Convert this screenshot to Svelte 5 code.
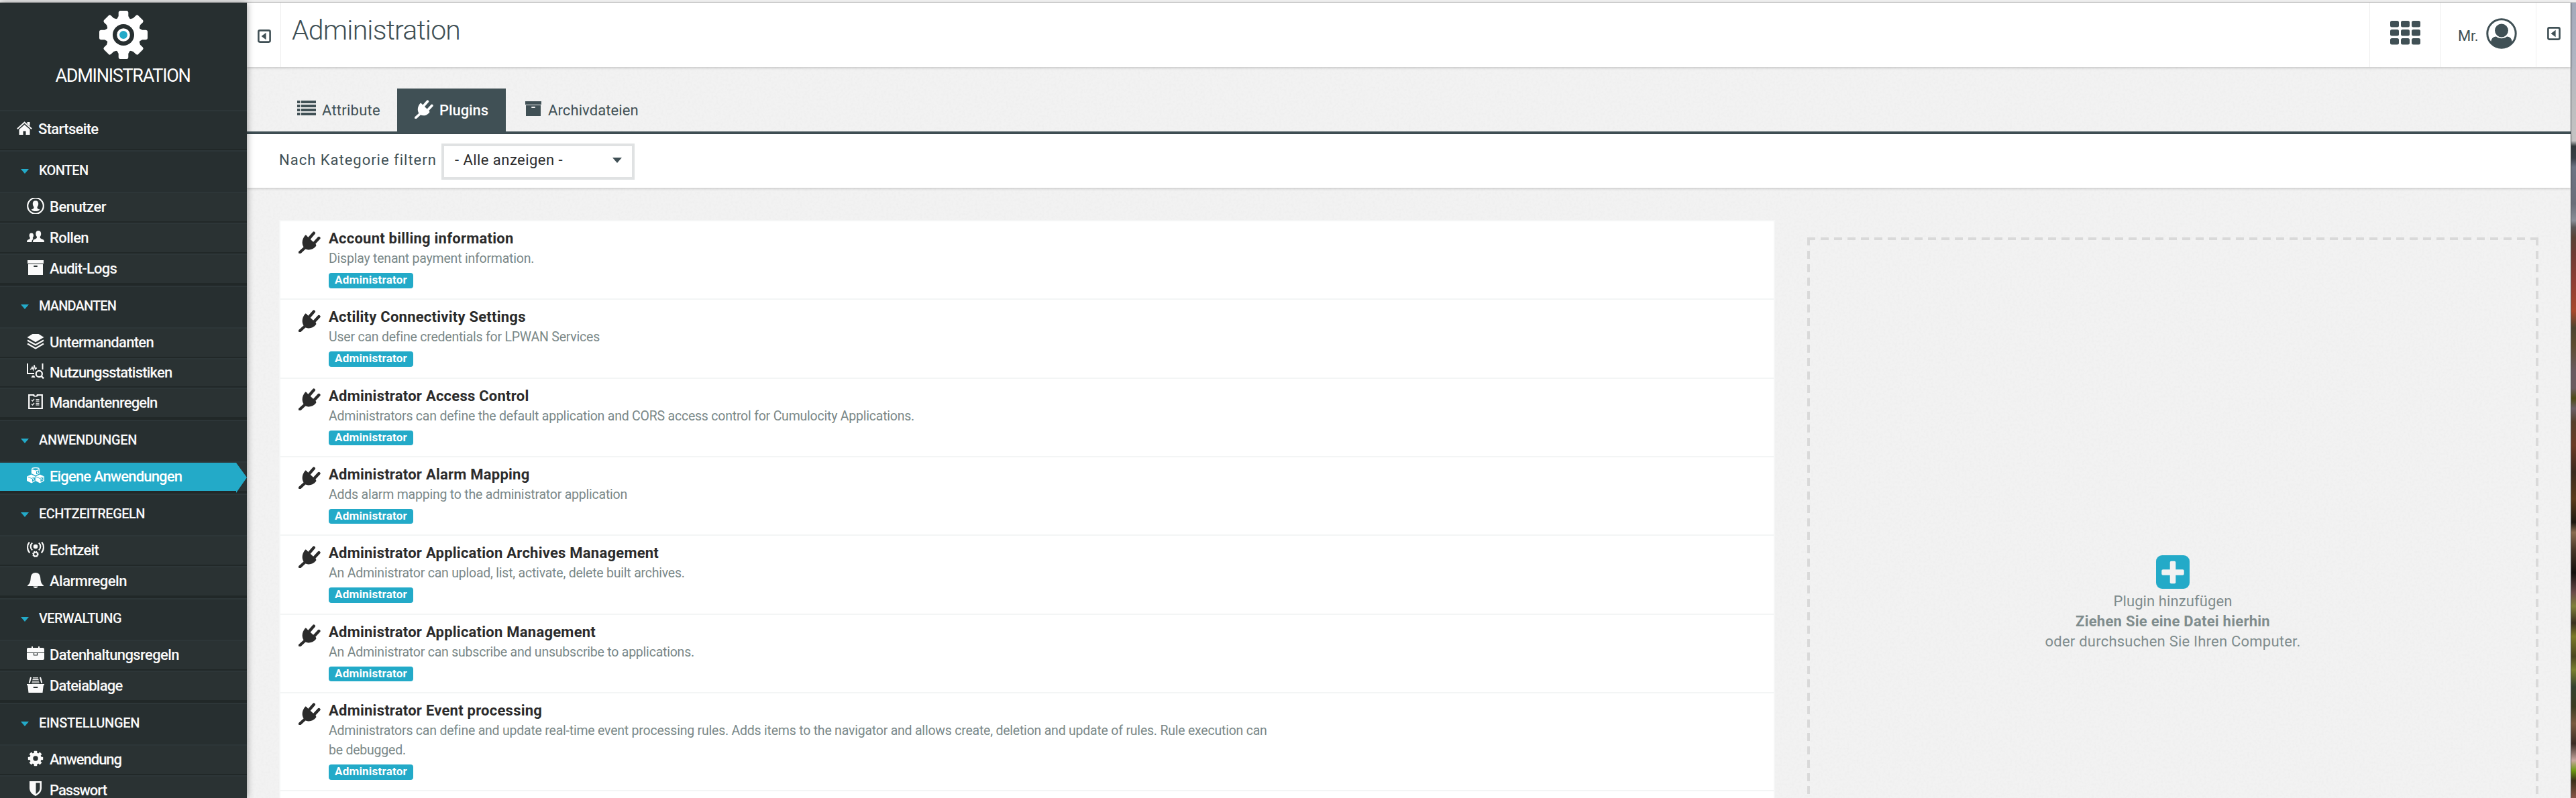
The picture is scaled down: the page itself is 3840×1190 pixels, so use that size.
<script>
  const nav = [
    { title: 'KONTEN', ls: -0.72, items: [
      { icon: 'user', label: 'Benutzer', ls: -0.49 },
      { icon: 'users', label: 'Rollen', ls: -0.6 },
      { icon: 'archive', label: 'Audit-Logs', ls: -0.77 }
    ] },
    { title: 'MANDANTEN', ls: -0.87, items: [
      { icon: 'layers', label: 'Untermandanten', ls: -0.69 },
      { icon: 'stats', label: 'Nutzungsstatistiken', ls: -0.79, tight: true },
      { icon: 'rules', label: 'Mandantenregeln', ls: -0.81 }
    ] },
    { title: 'ANWENDUNGEN', ls: -0.36, items: [
      { icon: 'cubes', label: 'Eigene Anwendungen', ls: -0.84, active: true }
    ] },
    { title: 'ECHTZEITREGELN', ls: -0.51, items: [
      { icon: 'broadcast', label: 'Echtzeit', ls: -0.73 },
      { icon: 'bell', label: 'Alarmregeln', ls: -0.5 }
    ] },
    { title: 'VERWALTUNG', ls: -0.57, items: [
      { icon: 'briefcase', label: 'Datenhaltungsregeln', ls: -0.6 },
      { icon: 'drawer', label: 'Dateiablage', ls: -0.76 }
    ] },
    { title: 'EINSTELLUNGEN', ls: -0.33, items: [
      { icon: 'gear', label: 'Anwendung', ls: -1.04 },
      { icon: 'shield', label: 'Passwort', ls: -0.98 }
    ] }
  ];

  const plugins = [
    ['Account billing information', 'Display tenant payment information.'],
    ['Actility Connectivity Settings', 'User can define credentials for LPWAN Services'],
    ['Administrator Access Control', 'Administrators can define the default application and CORS access control for Cumulocity Applications.'],
    ['Administrator Alarm Mapping', 'Adds alarm mapping to the administrator application'],
    ['Administrator Application Archives Management', 'An Administrator can upload, list, activate, delete built archives.'],
    ['Administrator Application Management', 'An Administrator can subscribe and unsubscribe to applications.'],
    ['Administrator Event processing', 'Administrators can define and update real-time event processing rules. Adds items to the navigator and allows create, deletion and update of rules. Rule execution can be debugged.'],
    ['', '']
  ];

  const teeth = [0, 45, 90, 135, 180, 225, 270, 315];
</script>

{#snippet plug()}
  <svg class="plug" viewBox="0 0 33 33">
    <path d="M10.2 5.6 Q12 5.4 13 7.4 L26 19.6 Q27 21.4 25.6 22.6 C21 28 14.5 28.6 9.8 26 C4.4 21.6 4 12.6 10.2 5.6Z" fill="currentColor" />
    <path d="M15.5 11 L22.8 2.6 M23 18 L30.4 10" stroke="currentColor" stroke-width="4.4" stroke-linecap="round" />
    <path d="M10 24 L2 31.4" stroke="currentColor" stroke-width="4.2" stroke-linecap="round" />
  </svg>
{/snippet}

{#snippet collapse()}
  <svg class="collapse" viewBox="0 0 20 20">
    <rect x="1.4" y="1.4" width="17.2" height="17.2" rx="2" fill="none" stroke="currentColor" stroke-width="2.6" />
    <path d="M5.6 10 L12.6 4.8 V15.2Z" fill="currentColor" />
  </svg>
{/snippet}

{#snippet archive(slot)}
  <path d="M1 1h24v5H1z M2 7h22v16H2z" fill="currentColor" />
  <rect x="10" y="9" width="6" height="2" rx="1" fill={slot} />
{/snippet}

{#snippet navIcon(name)}
  <svg class="ico" viewBox="0 0 26 24">
    {#if name === 'user'}
      <circle cx="13" cy="12" r="11.8" fill="none" stroke="currentColor" stroke-width="2.2" />
      <path d="M13 4.2c3 0 4.2 2 4.2 4.6 0 2-.7 3.8-1.7 4.8 0 2.4.4 3 3.9 3.8-1.6 1.9-3.8 2.5-6.4 2.5s-4.8-.6-6.4-2.5c3.5-.8 3.9-1.4 3.9-3.8-1-1-1.7-2.8-1.7-4.8 0-2.6 1.2-4.6 4.2-4.6z" fill="currentColor" />
    {:else if name === 'users'}
      <path d="M17.2 3c2.7 0 4 1.9 4 4.5 0 2-.7 3.6-1.6 4.5 0 2.2.8 2.9 3.4 3.7 2 .6 3 1.4 3 4.3H9c0-2.9 1-3.7 3-4.3 2.3-.8 3-1.5 3-3.7-1-.9-1.7-2.5-1.7-4.5 0-2.6 1.3-4.5 3.9-4.5z" fill="currentColor" />
      <path d="M6.8 6.5c2.3 0 3.2 1.5 3.2 3.6 0 1.6-.5 2.7-1.2 3.4 0 1 .3 1.6 1 2-1.5.8-2.5 1.8-2.5 4.5H0c0-2.4.8-3.2 2.400-3.7 1.800-.6 2.400-1.200 2.400-2.800-.7-.7-1.200-1.800-1.200-3.400 0-2.100 1-3.600 3.200-3.600z" fill="currentColor" />
    {:else if name === 'archive'}
      {@render archive('#2a3233')}
    {:else if name === 'layers'}
      <path d="M8.5 1h9L25.5 6 13 13.2.5 6z" fill="currentColor" />
      <path d="M1 10.5 13 17.3 25 10.5M1 15.5 13 22.4 25 15.5" fill="none" stroke="currentColor" stroke-width="2.2" />
    {:else if name === 'stats'}
      <path d="M1 0v15h10M23.5 0v9" fill="none" stroke="currentColor" stroke-width="2" />
      <path d="M5 8.500h1.500l1.500-3 1.500 4 1.600-7 1.400 6 1-1.500h1.500" fill="none" stroke="currentColor" stroke-width="1.4" />
      <path d="M6.500 21l1.500-3h3l1.500 3z" fill="currentColor" />
      <circle cx="18.300" cy="15.500" r="4.600" fill="none" stroke="currentColor" stroke-width="2.2" />
      <path d="M21.300 18.500 25 22.300" stroke="currentColor" stroke-width="2.4" />
    {:else if name === 'rules'}
      <path d="M11 2H3.200v20h19.600V2H15" fill="none" stroke="currentColor" stroke-width="2.2" />
      <path d="M9 1h2.200c0 3 3.600 3 3.600 0H17v2.500q-4 2.500-8 0z" fill="currentColor" />
      <path d="M7 9.500l1.500 1.500 2.500-3M7 15.500l1.500 1.500 2.500-3" fill="none" stroke="currentColor" stroke-width="1.3" />
      <path d="M13.500 8.700h5M13.500 11.200h5M13.500 14.300h5M13.500 16.800h5" stroke="currentColor" stroke-width="1.3" />
    {:else if name === 'cubes'}
      <path d="M6.800 2.500 13 4.500 19.200 2.500V9L13 12 6.800 9z" fill="currentColor" />
      <path d="M0 13.500 6.500 10.500 13 13.500V20l-6 3.500L0 20z M13 13.500 19.500 10.500 26 13.500V20l-6.500 3.500L13 20z" fill="currentColor" />
      <path d="M7.500 1.700 Q13 -.5 18.500 1.700" fill="none" stroke="currentColor" stroke-width="1.3" />
      <path d="M1.500 14l5.500 2.500 5.500-2.500M14 14l5.500 2.500 5.500-2.500M13 12v8" fill="none" stroke="#23aac8" stroke-width=".9" />
      <path d="M14.500 6.300l3.200-1.300v3l-3.200 1.500zM8.500 17.800l3-1.500v2.700l-3 1.500zM21 17.800l3-1.500v2.700l-3 1.500z" fill="none" stroke="#23aac8" stroke-width="1.1" />
    {:else if name === 'broadcast'}
      <circle cx="13" cy="8" r="3.300" fill="currentColor" />
      <path d="M8.200 13.500a7.200 7.200 0 0 1 0-11M17.800 13.500a7.200 7.200 0 0 0 0-11M4.300 17.500c-4.200-4.500-4.200-11.500-.5-16M21.700 17.500c4.200-4.500 4.200-11.500.5-16" fill="none" stroke="currentColor" stroke-width="2.1" />
      <circle cx="13" cy="19.500" r="3" fill="none" stroke="currentColor" stroke-width="2" />
      <circle cx="13" cy="19.500" r="4.200" fill="none" stroke="currentColor" stroke-width="1.2" stroke-dasharray="1.650 1.650" />
    {:else if name === 'bell'}
      <path d="M13 1c4.500 0 6.800 3 7.200 7.500.5 6.500 1.400 8.800 4.800 11.500v1H1v-1c3.400-2.700 4.300-5 4.800-11.500C6.200 4 8.500 1 13 1zM9.500 21.500h7c-.5 3.200-6.500 3.200-7 0z" fill="currentColor" />
    {:else if name === 'briefcase'}
      <path d="M2 3h5V1h2v2h8V1h2v2h5q2 0 2 2v5H0V5q0-2 2-2z M0 11h26v8q0 2-2 2H2q-2 0-2-2z" fill="currentColor" />
      <path d="M10.500 11v3h5v-3" fill="none" stroke="#2a3233" stroke-width="1.2" />
    {:else if name === 'drawer'}
      <path d="M0 11h26v2h-1.200L23.500 24h-21L1.200 13H0z" fill="currentColor" />
      <rect x="9.500" y="15" width="7" height="2" rx="1" fill="#2a3233" />
      <path d="M6 1 3.700 9.500M20 1l2.300 8.500" stroke="currentColor" stroke-width="2" />
      <path d="M9 1.800h8M8.500 4.300h9M8 6.800h10M7.500 9.200h11" stroke="currentColor" stroke-width="1.3" />
    {:else if name === 'gear'}
      <circle cx="13" cy="12" r="6.200" fill="none" stroke="currentColor" stroke-width="5" />
      {#each teeth as a}
        <rect x="10.700" y=".8" width="4.600" height="5" rx=".8" fill="currentColor" transform="rotate({a} 13 12)" />
      {/each}
    {:else if name === 'shield'}
      <path d="M4 0h18v10c0 5.500-3.500 9.500-9 12C7.500 19.500 4 15.500 4 10z" fill="currentColor" />
      <path d="M13.500 2.500H19.500V10.500c0 3.500-2.500 6.500-6 8.500z" fill="#2a3233" />
    {/if}
  </svg>
{/snippet}

<div class="page">
  <div class="chrome"></div>
  <div class="frame">
    <nav class="sidebar">
      <div class="brand">
        <svg class="logo" viewBox="-36 -36 72 72">
          {#each teeth as a}
            <path d="M-5 -36H5Q7 -36 7.300 -33.500V-28L10 -23H-10L-7.300 -28V-33.500Q-7 -36 -5 -36Z" fill="#fff" transform="rotate({a})" />
          {/each}
          <circle r="26" fill="#fff" />
          <circle r="16" fill="#272f30" />
          <circle r="9.800" fill="#fff" />
          <circle r="5.900" fill="#23aac8" />
        </svg>
        <span class="brand-name">ADMINISTRATION</span>
      </div>
      <div class="home">
        <svg class="house" viewBox="0 0 23 20">
          <path d="M11.500 5 19.500 12V20H13.500V14.500H9.500V20H3.500V12z M15.500 1h4v6l-4-3.500z" fill="currentColor" />
          <path d="M.8 11.300 11.500 1.600 22.200 11.300" fill="none" stroke="currentColor" stroke-width="1.9" />
        </svg>
        <span>Startseite</span>
      </div>
      {#each nav as group}
        <div class="group">
          <i class="caret"></i><span style:letter-spacing="{group.ls}px">{group.title}</span>
        </div>
        <div class="items">
          {#each group.items as it}
            <div class="item" class:active={it.active} class:tight={it.tight}>
              {@render navIcon(it.icon)}
              <span style:letter-spacing="{it.ls}px">{it.label}</span>
            </div>
          {/each}
        </div>
      {/each}
    </nav>

    <main>
      <svg class="grain" aria-hidden="true">
        <filter id="grain">
          <feTurbulence type="fractalNoise" baseFrequency=".28" numOctaves="2" seed="4" />
          <feColorMatrix values="0 0 0 0 .5  0 0 0 0 .5  0 0 0 0 .5  .14 0 0 0 -.055" />
        </filter>
        <rect width="100%" height="100%" filter="url(#grain)" />
      </svg>

      <header>
        <div class="toggle">{@render collapse()}</div>
        <h1>Administration</h1>
        <div class="apps">
          <svg class="apps-icon" viewBox="0 0 45 36">
            {#each [0, 1, 2] as r}
              {#each [0, 1, 2] as c}
                <rect x={c * 16} y={r * 13} width="13" height="9.600" rx="2.500" fill="currentColor" />
              {/each}
            {/each}
          </svg>
        </div>
        <div class="account">
          <span>Mr.</span>
          <svg class="avatar" viewBox="0 0 46 46">
            <circle cx="23" cy="23" r="21.200" fill="none" stroke="currentColor" stroke-width="3" />
            <circle cx="23" cy="18.500" r="10" fill="currentColor" />
            <path d="M7 37C7.500 31 10 27.500 15 27.500C19 31 27 31 31 27.500C36 27.500 38.500 31 39 37C30 46 16 46 7 37Z" fill="currentColor" />
          </svg>
        </div>
        <div class="drawer-toggle">{@render collapse()}</div>
      </header>

      <div class="tabs">
        <div class="tab first">
          <svg class="list" viewBox="0 0 28 22">
            {#each [0, 6, 12, 18] as y}
              <path d="M0 {y}h4.500v4H0zM6 {y}h22v4H6z" fill="currentColor" />
            {/each}
          </svg>
          <span class="t-attr">Attribute</span>
        </div>
        <div class="tab on">{@render plug()}<span>Plugins</span></div>
        <div class="tab third">
          <svg class="arch" viewBox="0 0 26 24">{@render archive('#f0f0f0')}</svg>
          <span>Archivdateien</span>
        </div>
      </div>

      <div class="filter">
        <span class="filter-label">Nach Kategorie filtern</span>
        <div class="select"><span>- Alle anzeigen -</span><i></i></div>
      </div>

      <div class="content">
        <div class="plugins">
          {#each plugins as [name, text]}
            <div class="plugin">
              {#if name}
                {@render plug()}
                <div class="info">
                  <h2>{name}</h2>
                  <p>{text}</p>
                  <span class="badge">Administrator</span>
                </div>
              {/if}
            </div>
          {/each}
        </div>
        <div class="drop">
          <svg class="plus" viewBox="0 0 50 50">
            <rect width="50" height="50" rx="9" fill="#23aac8" />
            <rect x="8.300" y="21.200" width="33.400" height="8.600" rx="2" fill="#f2f2f2" />
            <rect x="20.700" y="8.800" width="8.600" height="33.400" rx="2" fill="#f2f2f2" />
          </svg>
          <span class="d1">Plugin hinzufügen</span>
          <strong>Ziehen Sie eine Datei hierhin</strong>
          <span class="d2">oder durchsuchen Sie Ihren Computer.</span>
        </div>
      </div>
    </main>
    <div class="desktop"></div>
  </div>
</div>

<style>
  :global(body) { background: #f0f0f0; }
  .page {
    width: 3840px; height: 1190px; overflow: hidden; display: flex; flex-direction: column;
    font-family: Roboto, "Liberation Sans", sans-serif; font-size: 22px; color: #405055;
  }
  .page :global(*) { box-sizing: border-box; }
  svg { display: block; flex: none; }
  .chrome { height: 4px; flex: none; background: #eee; border-bottom: 1px solid #c9c9c9; }
  .frame { flex: 1; min-height: 0; display: flex; position: relative; }

  .sidebar {
    width: 368px; flex: none; background: #272f30; color: #fafafa; font-weight: 500;
    box-shadow: 0 0 10px rgba(0, 0, 0, .4); z-index: 2; height: 1186px; overflow: hidden;
  }
  .brand { height: 160px; padding-top: 12px; display: flex; flex-direction: column; align-items: center; }
  .logo { width: 72px; height: 72px; }
  .brand-name { font-size: 27px; font-weight: 400; letter-spacing: -1.27px; line-height: 32px; margin: 9px 2px 0 0; color: #fff; }
  .home {
    height: 60px; border-top: 2px solid #2d3638; border-bottom: 2px solid #212828;
    display: flex; align-items: center; padding: 0 0 3px 25px; gap: 9px; letter-spacing: -.65px;
  }
  .house { width: 23px; height: 20px; margin-top: -4px; }
  .group {
    height: 62px; border-top: 2px solid #2d3638; font-size: 20px;
    display: flex; align-items: center; padding: 0 0 4px 31px;
  }
  .caret { width: 12px; height: 7px; background: #23aac8; clip-path: polygon(0 0, 100% 0, 50% 100%); margin: 3px 15px 0 0; }
  .item {
    height: 46px; background: #2a3233; border-top: 2px solid #2d3638; border-bottom: 2px solid #212828;
    display: flex; align-items: center; padding-left: 40px; gap: 8px;
  }
  .item span { margin-top: -2px; }
  .item.tight { height: 44px; }
  .item:last-child { height: 48px; border-bottom-width: 4px; }
  .ico { width: 26px; height: 24px; margin-top: -4px; }
  .item.active { position: relative; color: #fff; }
  .item.active > :global(*) { position: relative; }
  .item.active::before {
    content: ""; position: absolute; left: 0; top: 0; width: 368px; height: 46px; background: #23aac8;
    clip-path: polygon(0 0, 352px 0, 368px 22px, 352px 45px, 352px 42px, 0 42px);
  }

  main { width: 3464px; flex: none; background: #f2f2f2; position: relative; display: flex; flex-direction: column; }
  main > :not(.grain) { position: relative; }
  .grain { position: absolute; inset: 0; width: 100%; height: 100%; }
  header {
    height: 96px; flex: none; background: #fff; display: flex; box-shadow: 0 1px 4px rgba(0, 0, 0, .22);
  }
  .collapse { width: 20px; height: 20px; }
  .toggle { width: 51px; border-right: 1px solid #eee; padding: 40px 0 0 16px; }
  h1 { margin: 0; flex: 1; font-weight: 300; font-size: 41px; line-height: 48px; letter-spacing: -.83px; padding: 17px 0 0 16px; }
  .apps { width: 106px; border-left: 1px solid #eee; padding: 27px 0 0 30px; }
  .apps-icon { width: 45px; height: 36px; }
  .account { width: 142px; border-left: 1px solid #eee; display: flex; padding: 23px 0 0 25px; }
  .account span { width: 42px; line-height: 26px; margin-top: 14px; letter-spacing: -.3px; }
  .avatar { width: 46px; height: 46px; }
  .drawer-toggle { width: 52px; border-left: 1px solid #eee; padding: 36px 0 0 16px; }

  .tabs { height: 100px; flex: none; border-bottom: 4px solid #405055; display: flex; align-items: flex-end; padding-left: 50px; }
  .tab { height: 64px; display: flex; align-items: center; letter-spacing: .1px; }
  .tab.first { width: 174px; padding-left: 25px; }
  .list { width: 28px; height: 22px; margin: -6px 9px 0 0; }
  .t-attr { letter-spacing: .25px; }
  .tab.on { width: 162px; background: #405055; color: #fff; font-weight: 500; padding-left: 26px; letter-spacing: -.08px; }
  .tab .plug { width: 28px; height: 28px; margin: -3px 9px 0 0; }
  .tab.third { padding-left: 28px; }
  .arch { width: 26px; height: 24px; margin: -4px 9px 0 0; }

  .filter { height: 80px; flex: none; background: #fff; display: flex; align-items: center; padding-left: 48px; box-shadow: 0 1px 4px rgba(0, 0, 0, .22); }
  .filter-label { width: 242px; letter-spacing: .99px; white-space: nowrap; margin-top: -4px; }
  .select {
    width: 288px; height: 54px; margin-top: 2px; border: 4px solid #e0e2e3; background: #fff; color: #2b2b2b;
    display: flex; align-items: center; justify-content: space-between; padding: 0 15px 5px 16px; letter-spacing: .45px;
  }
  .select i { width: 14px; height: 8px; background: #405055; clip-path: polygon(0 0, 100% 0, 50% 100%); margin-top: 1px; }

  .content { flex: none; display: flex; align-items: flex-start; padding: 48px 0 0 48px; gap: 48px; }
  .plugins { width: 2230px; border: 2px solid #f5f6f6; background: #fff; }
  .plugin { display: flex; min-height: 117.33px; padding: 10px 0 15px 27px; border-bottom: 2px solid #f3f5f5; }
  .plugin .plug { width: 33px; height: 33px; margin: 4.5px 12px 0 0; color: #2b2b2b; }
  h2 { margin: 0; font-size: 22px; font-weight: 700; line-height: 31px; letter-spacing: .24px; color: #2b2b2b; }
  p { margin: 0; font-size: 19.5px; line-height: 29.5px; letter-spacing: -.22px; max-width: 1420px; color: #7a8888; }
  .badge {
    display: block; width: 126px; height: 22.5px; margin-top: 6.5px; border-radius: 4px; background: #23aac8; color: #fff;
    font-size: 17px; font-weight: 700; line-height: 21px; letter-spacing: .22px; text-align: center;
  }

  .drop {
    --dash: #d9d9d9 0 12px, transparent 12px 19.963px;
    width: 1090px; height: 1090px; margin-top: 26px; padding-top: 474px;
    display: flex; flex-direction: column; align-items: center; color: #7f8c8d; line-height: 30px;
    background:
      repeating-linear-gradient(90deg, var(--dash)) 0 0 / 100% 4px no-repeat,
      repeating-linear-gradient(180deg, var(--dash)) 0 0 / 4px 100% no-repeat,
      repeating-linear-gradient(180deg, var(--dash)) 100% 0 / 4px 100% no-repeat;
  }
  .plus { width: 50px; height: 50px; margin-bottom: 4px; }
  .d1 { letter-spacing: .1px; }
  .drop strong { letter-spacing: .26px; }
  .d2 { letter-spacing: .22px; }

  .desktop {
    width: 8px; border-left: 1px solid #4a4d52;
    background: linear-gradient(180deg, #a3a9ba 0, #b0b5c2 80px, #bdbdbf 150px, #c4c3c3 206px, #33393c 214px, #3a4048 232px,
      #6d7484 245px, #6a6d78 300px, #8a8f98 325px, #5a5656 335px, #5a4236 350px, #6e3a34 375px, #8a3c34 410px, #a8482c 460px,
      #4c4430 485px, #5c4c30 510px, #6a5a60 550px, #6a5c60 575px, #4d4a16 590px, #6c5f66 605px, #55402c 625px, #6b3c26 660px,
      #3a2a1e 700px, #5a3a1c 740px, #1d1710 775px, #8a6c50 790px, #4a3828 815px, #14100d 850px, #6a4c48 880px, #80803a 900px,
      #3a2e1e 925px, #7c7a28 945px, #4a4420 975px, #7a8030 995px, #34402e 1020px, #3c3c22 1050px, #7a5a40 1075px,
      #3a2c24 1105px, #c8a8a0 1130px, #6c9a10 1145px, #3a3018 1160px, #8a5648 1186px);
  }
</style>
